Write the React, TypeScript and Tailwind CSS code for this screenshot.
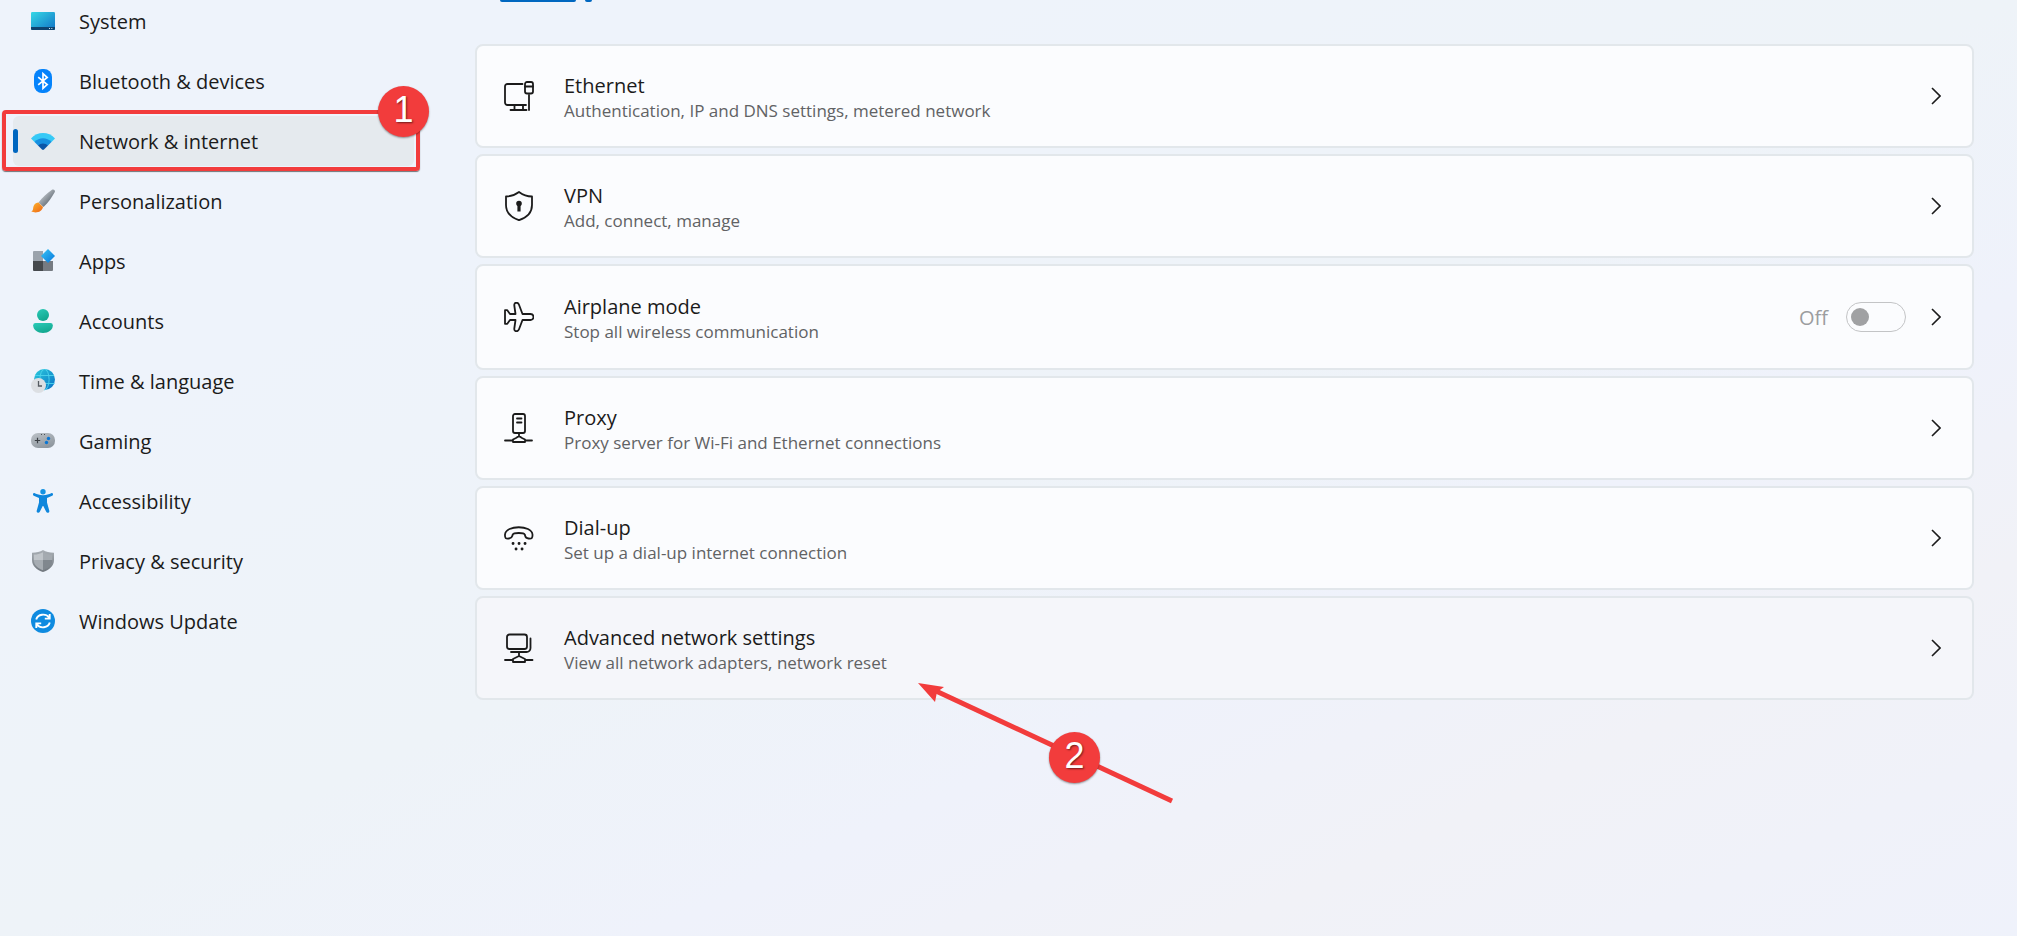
import type { ReactNode } from "react";

const navItems = [
  { label: "System", icon: <SystemIcon /> },
  { label: "Bluetooth & devices", icon: <BluetoothIcon /> },
  { label: "Network & internet", icon: <WifiIcon />, active: true },
  { label: "Personalization", icon: <BrushIcon /> },
  { label: "Apps", icon: <AppsIcon /> },
  { label: "Accounts", icon: <AccountsIcon /> },
  { label: "Time & language", icon: <TimeIcon /> },
  { label: "Gaming", icon: <GamingIcon /> },
  { label: "Accessibility", icon: <AccessibilityIcon /> },
  { label: "Privacy & security", icon: <PrivacyIcon /> },
  { label: "Windows Update", icon: <UpdateIcon /> },
];

function NavIcon({ children }: { children: ReactNode }) {
  return (
    <svg viewBox="0 0 24 24" className="size-6 shrink-0" aria-hidden="true">
      {children}
    </svg>
  );
}

function SystemIcon() {
  return (
    <NavIcon>
      <defs>
        <linearGradient id="system" x1="0" y1="0" x2="1" y2="1">
          <stop offset="0" stopColor="#35d8e6" />
          <stop offset="1" stopColor="#1173c6" />
        </linearGradient>
      </defs>
      <rect y="3" width="24" height="18" rx="1.2" fill="url(#system)" />
      <path d="M0 18h24v1.8a1.2 1.2 0 0 1-1.2 1.2H1.2A1.2 1.2 0 0 1 0 19.8z" fill="#0d4470" />
      <path d="M18 19.5h1M20.3 19.5h1" stroke="#d5ecfa" />
    </NavIcon>
  );
}

function BluetoothIcon() {
  return (
    <NavIcon>
      <rect x="3" width="18" height="24" rx="8" fill="#0583fb" />
      <path d="M7.2 8.2l9 7.3-4.2 3.8V4.700l4.200 3.800-9 7.300" fill="none" stroke="#fff" strokeWidth="1.7" />
    </NavIcon>
  );
}

function WifiIcon() {
  return (
    <NavIcon>
      <path d="M0 9.500C6.500 2.300 17.500 2.300 24 9.500L20.500 13h-17z" fill="#36c9f6" />
      <path d="M3.500 13c4.700-5 12.300-5 17 0L17 16.500H7z" fill="#1790e0" />
      <path d="M7 16.500c2.800-2.800 7.200-2.800 10 0l-4 4q-1 .9-2 0z" fill="#0b56a8" />
    </NavIcon>
  );
}

function BrushIcon() {
  return (
    <NavIcon>
      <defs>
        <linearGradient id="handle" x1="0" y1="0" x2="1" y2="1">
          <stop offset=".3" stopColor="#b4bac0" />
          <stop offset=".7" stopColor="#6c757e" />
        </linearGradient>
        <linearGradient id="bristle" x1="0" y1="0" x2="1" y2="1">
          <stop offset="0" stopColor="#fcb830" />
          <stop offset="1" stopColor="#ee6413" />
        </linearGradient>
      </defs>
      <path d="M21 .8c1.500-1.200 3.500.4 2.800 2.200C21 8 17.500 13.500 12.500 18L7.500 13.500C11.500 8.500 16 4 21 .8z" fill="url(#handle)" />
      <path d="M7.500 13.500l4.500 4.500c-1 5-6.500 6.500-12 4.600 3-1.200 1.500-4 3-6.400 1-1.700 2.700-2.600 4.500-2.700z" fill="url(#bristle)" />
    </NavIcon>
  );
}

function AppsIcon() {
  return (
    <NavIcon>
      <defs>
        <linearGradient id="tile" x1="0" y1="0" x2="1" y2="1">
          <stop offset="0" stopColor="#38c6f5" />
          <stop offset="1" stopColor="#0675dc" />
        </linearGradient>
      </defs>
      <path d="M3 2h9v10H2V3a1 1 0 0 1 1-1z" fill="#9ba3ac" />
      <path d="M2 12h10v10H3a1 1 0 0 1-1-1z" fill="#45494d" />
      <path d="M12 12h10v9a1 1 0 0 1-1 1h-9z" fill="#767b82" />
      <path d="M17 0l7 6.900-7 7-7-7z" fill="url(#tile)" />
    </NavIcon>
  );
}

function AccountsIcon() {
  return (
    <NavIcon>
      <defs>
        <linearGradient id="person" x1="0" y1="0" x2=".5" y2="1">
          <stop offset="0" stopColor="#2bcbb8" />
          <stop offset="1" stopColor="#12a78f" />
        </linearGradient>
      </defs>
      <circle cx="12" cy="6" r="6" fill="url(#person)" />
      <path d="M4.500 14h15a2.300 2.300 0 0 1 2.300 2.300C21.800 21 17.500 24 12 24s-9.800-3-9.800-7.700A2.300 2.300 0 0 1 4.500 14z" fill="url(#person)" />
    </NavIcon>
  );
}

function TimeIcon() {
  return (
    <NavIcon>
      <defs>
        <linearGradient id="globe" x1="0" y1="0" x2="1" y2="1">
          <stop offset="0" stopColor="#2ccbdc" />
          <stop offset="1" stopColor="#0870c6" />
        </linearGradient>
      </defs>
      <circle cx="13.500" cy="10.500" r="10.500" fill="url(#globe)" />
      <g fill="none" stroke="#4ed4ec" strokeWidth=".9">
        <ellipse cx="13.500" cy="10.500" rx="4.600" ry="10.300" />
        <path d="M4 6.500h19M3.500 14.500h20" />
      </g>
      <circle cx="7.500" cy="16.500" r="7.500" fill="#dcdfe3" />
      <path d="M7.500 12v5H11" fill="none" stroke="#555b61" strokeWidth="1.300" />
    </NavIcon>
  );
}

function GamingIcon() {
  return (
    <NavIcon>
      <defs>
        <linearGradient id="pad" x1="0" y1="0" x2=".6" y2="1">
          <stop offset="0" stopColor="#bdc3c9" />
          <stop offset="1" stopColor="#8f979f" />
        </linearGradient>
      </defs>
      <rect y="4" width="24" height="15" rx="7" fill="url(#pad)" />
      <path d="M6.500 8.800v5.400M3.800 11.500h5.400" stroke="#3a3f44" strokeWidth="1.200" />
      <circle cx="17.500" cy="9.500" r="1.700" fill="#0a75d3" />
      <circle cx="15.500" cy="13.500" r="1.700" fill="#0a75d3" />
      <path d="M10 5.500h1M13 5.500h1" stroke="#4a5056" />
    </NavIcon>
  );
}

function AccessibilityIcon() {
  return (
    <NavIcon>
      <circle cx="12" cy="2.700" r="2.700" fill="#1492e2" />
      <path
        d="M3.800 4.200C6 5 8.500 6.200 12 6.200s6-1.200 8.200-2c1.700-.6 2.600 1.800 1 2.500L16 9v4.500l2.300 8.300c.5 1.900-2.400 2.800-3.100 1L12.300 17h-.6l-2.900 5.800c-.8 1.800-3.600.9-3.100-1L8 13.500V9L2.800 6.700c-1.600-.7-.7-3.100 1-2.500z"
        fill="#0e86dc"
      />
    </NavIcon>
  );
}

function PrivacyIcon() {
  return (
    <NavIcon>
      <defs>
        <linearGradient id="shield" x1="0" y1="0" x2="0" y2="1">
          <stop offset="0" stopColor="#a9afb5" />
          <stop offset="1" stopColor="#6f767d" />
        </linearGradient>
      </defs>
      <path d="M12 1c3 2 6.500 2.700 11 2.700V11c0 6-5 10-11 12C6 21 1 17 1 11V3.700C5.500 3.700 9 3 12 1z" fill="url(#shield)" />
      <path d="M12 3.200C9 4.900 6 5.500 2.800 5.600V11H12z" fill="#bfc4c9" />
      <path d="M2.800 11c0 5 4 8.300 9.200 10.200V11z" fill="#a6acb2" />
      <path d="M12 3.200c3 1.700 6 2.300 9.200 2.400V11H12z" fill="#a4aab0" />
      <path d="M21.200 11c0 5-4 8.300-9.200 10.200V11z" fill="#80878e" />
    </NavIcon>
  );
}

function UpdateIcon() {
  return (
    <NavIcon>
      <circle cx="12" cy="12" r="12" fill="#0f8be0" />
      <g fill="none" stroke="#fff" strokeWidth="1.900">
        <path d="M5.200 10.500c1.600-5.500 9.500-6.500 12.800-2M18.700 5v4.600h-4.900" />
        <path d="M18.800 13.500c-1.600 5.500-9.500 6.500-12.800 2M5.300 19v-4.600h4.900" />
      </g>
    </NavIcon>
  );
}

// outline icons of the setting cards
function CardIcon({ children }: { children: ReactNode }) {
  return (
    <svg
      viewBox="0 0 30 30"
      className="size-[30px] shrink-0"
      fill="none"
      stroke="#1b1b1b"
      strokeWidth="1.800"
      strokeLinecap="round"
      strokeLinejoin="round"
      aria-hidden="true"
    >
      {children}
    </svg>
  );
}

const cards = [
  {
    title: "Ethernet",
    text: "Authentication, IP and DNS settings, metered network",
    icon: (
      <CardIcon>
        <path d="M18.500 3H3.500A2.500 2.500 0 0 0 1 5.500v16A2.500 2.500 0 0 0 3.500 24H22M6.500 29h16M10.500 24v5M19 24v5" />
        <path d="M25 14v15" />
        <rect x="21" y="1" width="8" height="11.500" rx="2" />
        <path d="M21 5.500h8" />
      </CardIcon>
    ),
  },
  {
    title: "VPN",
    text: "Add, connect, manage",
    icon: (
      <CardIcon>
        <path d="M15 1c4 3 8 4.500 13 4.500V14c0 7.500-5 12.500-13 15.200C7 26.500 2 21.500 2 14V5.500C7 5.500 11 4 15 1z" />
        <circle cx="15" cy="12.500" r="1.900" fill="#1b1b1b" />
        <path d="M15 13v7.500" strokeWidth="3.200" strokeLinecap="butt" />
      </CardIcon>
    ),
  },
  {
    title: "Airplane mode",
    text: "Stop all wireless communication",
    toggle: true,
    icon: (
      <CardIcon>
        <path d="M11.500 12L10.300 3.500C9.900 0 14 0 15 2.700L18.500 12h8a2.800 2.800 0 0 1 0 6h-8L15 27.300c-1 2.700-5.100 2.700-4.700-.8L11.500 18H6l-2.700 3.800H1V8.200h2.300L6 12z" />
      </CardIcon>
    ),
  },
  {
    title: "Proxy",
    text: "Proxy server for Wi-Fi and Ethernet connections",
    icon: (
      <CardIcon>
        <rect x="9" y="1" width="12" height="19" rx="2" />
        <path d="M13 5.500h4.500M13 9.500h4.500M15 20v3.500M1 27.500h8M21 27.500h7M12 25l3-2 3 2 3 1.500v2.500H9v-2.500z" />
      </CardIcon>
    ),
  },
  {
    title: "Dial-up",
    text: "Set up a dial-up internet connection",
    icon: (
      <CardIcon>
        <path d="M1 11.500C2 1.800 27.500 1.800 28.500 11.500c.2 3.800-.8 4.500-4 4-3.800-.4-2.800-2-3.800-4-.7-2-11.200-2-11.900 0-1 2-.2 3.600-3.800 4-3.300.5-4.200-.2-4-4z" />
        <path d="M9 20.500h.1M15 20.500h.1M21 20.500h.1M12 26h.1M18 26h.1" strokeWidth="2.800" />
      </CardIcon>
    ),
  },
  {
    title: "Advanced network settings",
    text: "View all network adapters, network reset",
    icon: (
      <CardIcon>
        <rect x="3" y="1.500" width="20" height="14.500" rx="2.500" />
        <path d="M26.500 5.500v9.500a4 4 0 0 1-4 4H7M15 19v4M1 27h8M21 27h7.500M12 24.500l3-1.500 3 1.500 3 1.500v3H9v-3z" />
      </CardIcon>
    ),
  },
];

function Sidebar() {
  return (
    <nav className="-mt-1 w-[427px] shrink-0 px-[13px]">
      <ul className="flex flex-col gap-[10px]">
        {navItems.map(({ label, icon, active }) => (
          <li key={label} className="relative">
            <a
              href="#"
              aria-current={active ? "page" : undefined}
              className={
                active
                  ? "flex h-[50px] items-center rounded-md bg-[#e5eaee]"
                  : "flex h-[50px] items-center rounded-md"
              }
            >
              <span className={active ? "h-6 w-[5px] rounded-full bg-[#0067c0]" : "w-[5px]"} />
              <span className="ml-[13px]">{icon}</span>
              <span className="ml-6 pt-[2px]">{label}</span>
            </a>
            {active && (
              <>
                <div className="pointer-events-none absolute -top-[6px] -right-[6px] -bottom-[5px] -left-[11px] rounded border-4 border-[#f23c3c] shadow-[0_1px_1px_#0008]" />
                <Badge className="-top-[30px] -right-[15px]">1</Badge>
              </>
            )}
          </li>
        ))}
      </ul>
    </nav>
  );
}

function Badge({ className, children }: { className: string; children: ReactNode }) {
  return (
    <span
      className={`absolute flex size-[51px] items-center justify-center rounded-full bg-[#f23c3c] pb-1 font-['Liberation_Sans',sans-serif] text-[36px] leading-none text-white shadow-[0_1px_2px_#0006] [text-shadow:1px_1px_2px_#0008] ${className}`}
    >
      {children}
    </span>
  );
}

function Toggle() {
  return (
    <label className="flex items-center gap-[18px] text-[#9c9d9f]">
      <span className="pt-[2px]">Off</span>
      <input
        type="checkbox"
        role="switch"
        disabled
        aria-label="Airplane mode"
        className="flex h-[30px] w-[60px] appearance-none items-center rounded-full border border-[#c3c4c6] px-1 before:size-[18px] before:rounded-full before:bg-[#a0a1a3]"
      />
    </label>
  );
}

function Arrow() {
  return (
    <div className="pointer-events-none absolute top-[84px] left-[441px]">
      <svg width="258" height="124" viewBox="0 0 258 124" aria-hidden="true">
        <path d="M18 9L254 119" stroke="#f23c3c" strokeWidth="5" />
        <path d="M0 1l26 4-7 5-2 10z" fill="#f23c3c" />
      </svg>
      <Badge className="top-[50px] left-[131px]">2</Badge>
    </div>
  );
}

export default function App() {
  return (
    <div className="flex min-h-screen overflow-hidden bg-[linear-gradient(155deg,#eef3fb_0%,#eef3fb_25%,#eef3f8_50%,#eff2fb_66%,#f1f2f7_80%,#eff2fb_100%)] font-['Open_Sans','Noto_Sans',sans-serif] text-[20px] leading-7 text-[#1b1b1b]">
      <Sidebar />
      <main className="min-w-0 flex-1 pr-[43px] pl-12">
        <div className="flex h-11 items-start gap-[9px] pl-[25px]">
          <span className="h-[2px] w-[76px] rounded-b bg-[#0067c0]" />
          <span className="h-[2px] w-[7px] rounded-b bg-[#0067c0]" />
        </div>
        <ul className="flex flex-col gap-[6px]">
          {cards.map(({ title, text, icon, toggle }, i) => (
            <li
              key={title}
              className={`relative flex items-center rounded-lg border-2 border-[#e2e7eb] pr-[31px] pl-[27px] ${
                toggle ? "h-[106px]" : "h-[104px]"
              } ${i === cards.length - 1 ? "bg-[#f5f6fa]" : "bg-[#fbfcfe]"}`}
            >
              {icon}
              <a href="#" className="ml-[30px] flex-1 pt-[3px]">
                <span className="block leading-[26px]">{title}</span>
                <span className="block text-[17px] leading-6 text-[#616264]">{text}</span>
              </a>
              {toggle && <Toggle />}
              <svg
                viewBox="0 0 10 18"
                className="ml-[25px] h-[18px] w-[10px]"
                fill="none"
                stroke="#1b1b1b"
                strokeWidth="1.600"
                aria-hidden="true"
              >
                <path d="M1 1l8 8-8 8" />
              </svg>
              {i === cards.length - 1 && <Arrow />}
            </li>
          ))}
        </ul>
      </main>
    </div>
  );
}
